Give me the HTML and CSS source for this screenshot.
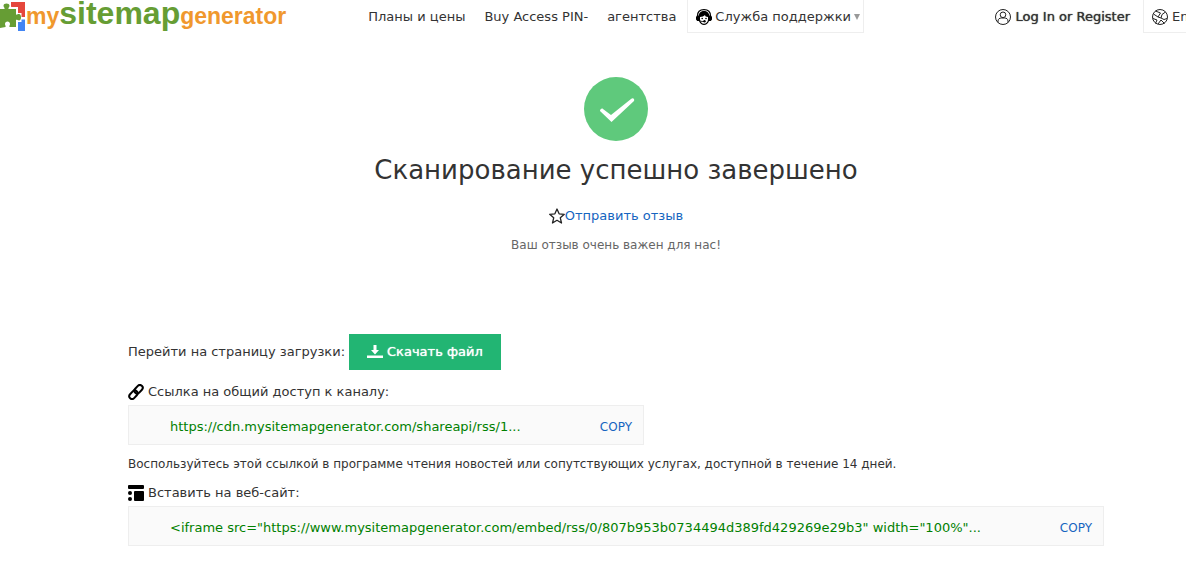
FILE: index.html
```html
<!DOCTYPE html>
<html lang="ru">
<head>
<meta charset="utf-8">
<title>Сканирование успешно завершено</title>
<link rel="stylesheet" href="styles.css">
</head>
<body>
<header class="header">
  <a class="logo" href="#">
    <svg class="logo-mark" viewBox="0 0 25 31" aria-hidden="true">
      <path fill="#e5473c" d="M9 2h16v15h-9z"/>
      <path fill="#4285f4" d="M25 19.500V31H16l2-11.500z"/>
      <path fill="#fff" d="M8 2h3v5h7v6h3.500v9H18v9H8z"/>
      <path fill="#669d34" d="M0 9h4.500C5 7.500 3.500 7.500 3.500 5.800 3.500 4.200 4.800 3.500 6.500 3.500s3 .700 3 2.300c0 1.700-1.500 1.700-1 3.200H16v5.500c1 .5 1.500-.5 3-.5s2 1.500 2 3.200-.5 3.300-2 3.300-2-1-3-.5V27H9.500c-.5-1.500.5-1.500.5-3s-1-2.500-2.500-2.500S5 22.500 5 24s1 1.500.5 3l-5.500 1z"/>
    </svg>
    <span class="logo-small">my</span><span class="logo-big">sitemap</span><span class="logo-small">generator</span>
  </a>
  <nav class="nav">
    <a href="#">Планы и цены</a>
    <a href="#">Buy Access PIN-</a>
    <a href="#">агентства</a>
  </nav>
  <button class="support" type="button">
    <svg class="icon" viewBox="0 0 16 16" aria-hidden="true">
      <path fill="none" stroke="#000" stroke-width="1.200" d="M1.500 7C1.500 3 4 .700 8 .700S14.500 3 14.500 7"/>
      <path fill="#000" d="M8 2C5 2 2.800 4 2.800 6.500L1 6.500 0 8v2.500L1.200 12H3c1 2.500 3 4 5 4s4-1.500 5-4h1.800l1.200-1.500V8l-1-1.500h-1.800C13.200 4 11 2 8 2z"/>
      <path fill="#fff" d="M4 8c2 0 4-1 5-2 0 1 1 2 3 2v2.500c0 2.500-2 4.300-4 4.300s-4-1.800-4-4.300z"/>
      <path fill="none" stroke="#000" d="M3 11.500c2 1 3 1 5 1"/>
      <circle cx="6.200" cy="9.500" r=".8"/><circle cx="10" cy="9.500" r=".8"/><circle cx="8.500" cy="12.300" r="1.200"/>
    </svg>
    <span>Служба поддержки</span>
    <svg class="caret" viewBox="0 0 6 6" aria-hidden="true"><path fill="#999" d="M0 0h6L3 6z"/></svg>
  </button>
  <a class="login" href="#">
    <svg class="icon" viewBox="0 0 16 16" fill="none" stroke="#222" aria-hidden="true">
      <circle cx="8" cy="8" r="7.500"/><circle cx="8" cy="5.800" r="2.800"/><path d="M3 13.500V12c0-2 1.500-3 3.500-3h3c2 0 3.500 1 3.500 3v1.500"/>
    </svg>
    <span>Log In or Register</span>
  </a>
  <button class="lang" type="button">
    <svg class="icon" viewBox="0 0 16 16" fill="none" stroke="#222" aria-hidden="true">
      <circle cx="8" cy="8" r="7.500"/><path d="M3.500 2l5 2L6 8 1.500 5M13.500 3L10 5.500 9 9l3 1.500 3-1M1 9.500L5 11l-1.500 3.500M6 15l3-4 3.500 3.500M6 8l3 1"/>
    </svg>
    <span>En</span>
  </button>
</header>
<main class="main">
  <section class="result">
    <svg class="success" viewBox="0 0 64 64" aria-hidden="true">
      <circle cx="32" cy="32" r="32" fill="#5fc97c"/>
      <path fill="#fff" d="M16 34c0-2 2-3 3-2l8 6 20-16c2-2 4 0 3 2L27.500 45z"/>
    </svg>
    <h1 class="title">Сканирование успешно завершено</h1>
    <a class="review" href="#">
      <svg class="icon" viewBox="0 0 16 16" aria-hidden="true"><path fill="none" stroke="#222" stroke-width="1.300" stroke-linejoin="round" d="M8 1l2.100 4.800 5.200.500-4 3.500 1.200 5.200L8 12.300 3.500 15l1.200-5.200-4-3.500 5.200-.500z"/></svg>Отправить отзыв
    </a>
    <p class="note">Ваш отзыв очень важен для нас!</p>
  </section>
  <section class="download">
    <span>Перейти на страницу загрузки:</span>
    <button class="download-btn" type="button">
      <svg class="icon" viewBox="0 0 16 16" aria-hidden="true"><path fill="#fff" d="M6.500 1h3v5H12l-4 4.500L4 6h2.500zM0 11.500h16V14H0z"/></svg>
      <span>Скачать файл</span>
    </button>
  </section>
  <section class="share">
    <h2 class="label">
      <svg class="icon" viewBox="0 0 16 16" fill="none" stroke="#000" stroke-width="2" aria-hidden="true">
        <rect x="-1" y="-2.800" width="9.500" height="5.600" rx="2.800" transform="translate(8 8) rotate(-47)"/>
        <rect x="-8.500" y="-2.800" width="9.500" height="5.600" rx="2.800" transform="translate(8 8) rotate(-47)"/>
      </svg>
      <span>Ссылка на общий доступ к каналу:</span>
    </h2>
    <div class="code code-short">
      <code>https://cdn.mysitemapgenerator.com/shareapi/rss/1...</code>
      <button class="copy" type="button">COPY</button>
    </div>
    <p class="hint">Воспользуйтесь этой ссылкой в программе чтения новостей или сопутствующих услугах, доступной в течение 14 дней.</p>
  </section>
  <section class="share">
    <h2 class="label">
      <svg class="icon" viewBox="0 0 16 16" aria-hidden="true"><rect width="16" height="4" rx="1"/><rect x="6" y="6" width="10" height="10" rx="1"/><circle cx="2" cy="8" r="2"/><circle cx="2" cy="14" r="2"/></svg>
      <span>Вставить на веб-сайт:</span>
    </h2>
    <div class="code">
      <code>&lt;iframe src="https://www.mysitemapgenerator.com/embed/rss/0/807b953b0734494d389fd429269e29b3" width="100%"...</code>
      <button class="copy" type="button">COPY</button>
    </div>
  </section>
</main>
</body>
</html>
```
FILE: styles.css
```css
* { box-sizing: border-box; }
body {
  margin: 0;
  background: #fff;
  color: #333;
  font: 13px/20px Verdana, "DejaVu Sans", sans-serif;
  overflow-x: hidden;
}
a { color: inherit; text-decoration: none; }
button { font: inherit; color: inherit; cursor: pointer; }
h1, h2, p { margin: 0; font-weight: 400; }
.icon { width: 16px; height: 16px; flex: none; }

.header { display: flex; align-items: flex-start; height: 33px; white-space: nowrap; }
.logo {
  display: flex;
  align-items: baseline;
  flex: none;
  height: 33px;
  font-family: Arial, "Liberation Sans", sans-serif;
  font-weight: 700;
  line-height: 27px;
}
.logo-mark { width: 25px; height: 31px; margin-right: 1px; align-self: flex-start; }
.logo-small { color: #f0982d; font-size: 23px; }
.logo-big { color: #669d34; font-size: 32px; }
.nav { display: flex; gap: 19px; margin-left: 82px; padding-top: 7px; }
.support, .lang {
  display: flex;
  align-items: center;
  gap: 4px;
  height: 33px;
  padding: 1px 8px 0;
  background: #fff;
  border: 1px solid #eee;
  border-top: 0;
}
.support { gap: 3px; margin-left: 11px; padding: 1px 3px 0 8px; }
.caret { width: 6px; height: 6px; }
.login {
  display: flex;
  align-items: center;
  gap: 4px;
  height: 33px;
  margin: 0 13px 0 auto;
  text-shadow: 0 0 1px currentColor;
}
.lang { width: 43px; padding-right: 0; border-right: 0; overflow: hidden; }

.main { padding: 44px 82px 28px 128px; }
.result { display: flex; flex-direction: column; align-items: center; }
.success { width: 64px; height: 64px; }
.title { margin-top: 9px; font-size: 26px; line-height: 40px; }
.review { display: flex; align-items: center; margin-top: 16px; color: #1565c0; }
.note { margin-top: 10px; color: #666; font-size: 12px; line-height: 18px; }
.download { display: flex; align-items: center; gap: 4px; margin-top: 80px; }
.download-btn {
  display: flex;
  align-items: center;
  gap: 4px;
  height: 36px;
  padding: 0 18px;
  border: 0;
  background: #22b573;
  color: #fff;
  text-shadow: 0 0 1px currentColor;
}
.share { margin-top: 12px; }
.label { display: flex; align-items: center; gap: 4px; font-size: 13px; line-height: 20px; }
.code {
  display: flex;
  align-items: center;
  justify-content: space-between;
  height: 40px;
  margin-top: 3px;
  padding: 3px 11px 0 41px;
  border: 1px solid #eee;
  background: #fafafa;
}
.code-short { max-width: 516px; }
.code code { color: #008000; font: inherit; white-space: nowrap; }
.copy { padding: 0; border: 0; background: none; color: #1565c0; font-size: 12px; }
.hint { margin-top: 9px; font-size: 12px; line-height: 20px; }
.share + .share { margin-top: 9px; }
```
